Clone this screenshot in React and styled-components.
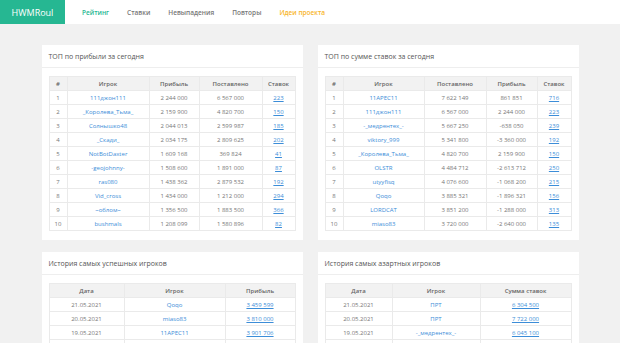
import React from 'react';
import styled, { createGlobalStyle } from 'styled-components';

const GlobalStyle = createGlobalStyle`
    html, body {
        margin: 0;
        padding: 0;
        background: #f1f1f1;
        font-family: 'Open Sans', 'Liberation Sans', sans-serif;
        color: #555;
    }
`;

const Navbar = styled.nav`
    display: flex;
    align-items: center;
    height: 24px;
    background: #fff;
`;

const Brand = styled.div`
    width: 65px;
    height: 24px;
    display: flex;
    align-items: center;
    justify-content: center;
    background: #26b792;
    color: #fff;
    font-size: 9px;
`;

const NavList = styled.div`
    display: flex;
    gap: 18px;
    margin-left: 17px;
`;

const NavLink = styled.a`
    font-size: 6.5px;
    font-weight: 600;
    color: ${p => (p.$active ? '#26b792' : p.$accent ? '#f8b62b' : '#777')};
`;

const Container = styled.div`
    width: 537px;
    margin: 21px auto 0;
    display: grid;
    grid-template-columns: 1fr 1fr;
    column-gap: 15px;
    row-gap: 12px;
`;

const Card = styled.div`
    background: #fff;
`;

const CardHeader = styled.div`
    height: 22px;
    display: flex;
    align-items: center;
    padding: 0 7px;
    border-bottom: 1px solid #eee;
    font-size: 7px;
    color: #555;
`;

const CardBody = styled.div`
    padding: 8px 7px 9px;
`;

const Table = styled.table`
    width: 100%;
    border-collapse: collapse;
    table-layout: fixed;
    font-size: 6px;
    text-align: center;
    border: 1px solid #eaeaea;
`;

const Th = styled.th`
    height: 13px;
    padding: 0;
    background: #f2f2f2;
    font-weight: 600;
    color: #666;
    border: 1px solid #eaeaea;
    width: ${p => p.$w || 'auto'};
`;

const Td = styled.td`
    height: 13px;
    padding: 0;
    border: 1px solid #eaeaea;
    color: #777;
`;

const Player = styled.a`
    color: #3c8dd8;
`;

const Count = styled.a`
    color: #3c8dd8;
    text-decoration: underline;
`;

const profitTop = [
    ['111джон111', '2 244 000', '6 567 000', '223'],
    ['_Королева_Тьма_', '2 159 900', '4 820 700', '150'],
    ['Солнышко48', '2 044 013', '2 599 987', '185'],
    ['_Скади_', '2 034 175', '2 809 625', '202'],
    ['NotBotDaxter', '1 609 168', '369 824', '41'],
    ['-geojohnny-', '1 508 600', '1 891 000', '87'],
    ['ras080', '1 438 362', '2 879 532', '192'],
    ['Vid_cross', '1 434 000', '1 212 000', '294'],
    ['~облом~', '1 356 500', '1 883 500', '366'],
    ['bushmals', '1 208 099', '1 580 896', '82'],
];

const betTop = [
    ['11APEC11', '7 622 149', '861 851', '716'],
    ['111джон111', '6 567 000', '2 244 000', '223'],
    ['-_медрентех_-', '5 667 250', '-638 050', '239'],
    ['viktory_999', '5 341 800', '-3 360 000', '192'],
    ['_Королева_Тьма_', '4 820 700', '2 159 900', '150'],
    ['OLSTR', '4 484 712', '-2 613 712', '250'],
    ['utyyfisq', '4 076 600', '-1 068 200', '215'],
    ['Qoqo', '3 885 321', '-1 896 321', '156'],
    ['LORDCAT', '3 851 200', '-1 288 000', '313'],
    ['miaso83', '3 720 000', '-2 640 000', '135'],
];

const successHistory = [
    ['21.05.2021', 'Qoqo', '3 459 599'],
    ['20.05.2021', 'miaso83', '3 810 000'],
    ['19.05.2021', '11APEC11', '3 901 706'],
    ['18.05.2021', 'Qoqo', '4 034 000'],
];

const gamblerHistory = [
    ['21.05.2021', 'ПРТ', '6 304 500'],
    ['20.05.2021', 'ПРТ', '7 722 000'],
    ['19.05.2021', '-_медрентех_-', '6 045 100'],
    ['18.05.2021', 'Vid_cross', '6 212 050'],
];

const TopTable = ({ cols, widths, rows }) => (
    <Table>
        <thead>
            <tr>
                {cols.map((c, i) => (
                    <Th key={c} $w={widths[i]}>{c}</Th>
                ))}
            </tr>
        </thead>
        <tbody>
            {rows.map((r, i) => (
                <tr key={i}>
                    <Td>{i + 1}</Td>
                    <Td><Player>{r[0]}</Player></Td>
                    <Td>{r[1]}</Td>
                    <Td>{r[2]}</Td>
                    <Td><Count>{r[3]}</Count></Td>
                </tr>
            ))}
        </tbody>
    </Table>
);

const HistoryTable = ({ cols, widths, rows }) => (
    <Table>
        <thead>
            <tr>
                {cols.map((c, i) => (
                    <Th key={c} $w={widths[i]}>{c}</Th>
                ))}
            </tr>
        </thead>
        <tbody>
            {rows.map((r, i) => (
                <tr key={i}>
                    <Td>{r[0]}</Td>
                    <Td><Player>{r[1]}</Player></Td>
                    <Td><Count>{r[2]}</Count></Td>
                </tr>
            ))}
        </tbody>
    </Table>
);

const App = () => (
    <>
        <GlobalStyle />
        <Navbar>
            <Brand>HWMRoul</Brand>
            <NavList>
                <NavLink $active>Рейтинг</NavLink>
                <NavLink>Ставки</NavLink>
                <NavLink>Невыпадения</NavLink>
                <NavLink>Повторы</NavLink>
                <NavLink $accent>Идеи проекта</NavLink>
            </NavList>
        </Navbar>
        <Container>
            <Card>
                <CardHeader>ТОП по прибыли за сегодня</CardHeader>
                <CardBody>
                    <TopTable
                        cols={['#', 'Игрок', 'Прибыль', 'Поставлено', 'Ставок']}
                        widths={['17px', '81px', '49px', '62px', 'auto']}
                        rows={profitTop}
                    />
                </CardBody>
            </Card>
            <Card>
                <CardHeader>ТОП по сумме ставок за сегодня</CardHeader>
                <CardBody>
                    <TopTable
                        cols={['#', 'Игрок', 'Поставлено', 'Прибыль', 'Ставок']}
                        widths={['17px', '80px', '61px', '50px', 'auto']}
                        rows={betTop}
                    />
                </CardBody>
            </Card>
            <Card>
                <CardHeader>История самых успешных игроков</CardHeader>
                <CardBody>
                    <HistoryTable
                        cols={['Дата', 'Игрок', 'Прибыль']}
                        widths={['74px', '100px', 'auto']}
                        rows={successHistory}
                    />
                </CardBody>
            </Card>
            <Card>
                <CardHeader>История самых азартных игроков</CardHeader>
                <CardBody>
                    <HistoryTable
                        cols={['Дата', 'Игрок', 'Сумма ставок']}
                        widths={['66px', '87px', 'auto']}
                        rows={gamblerHistory}
                    />
                </CardBody>
            </Card>
        </Container>
    </>
);

export default App;
